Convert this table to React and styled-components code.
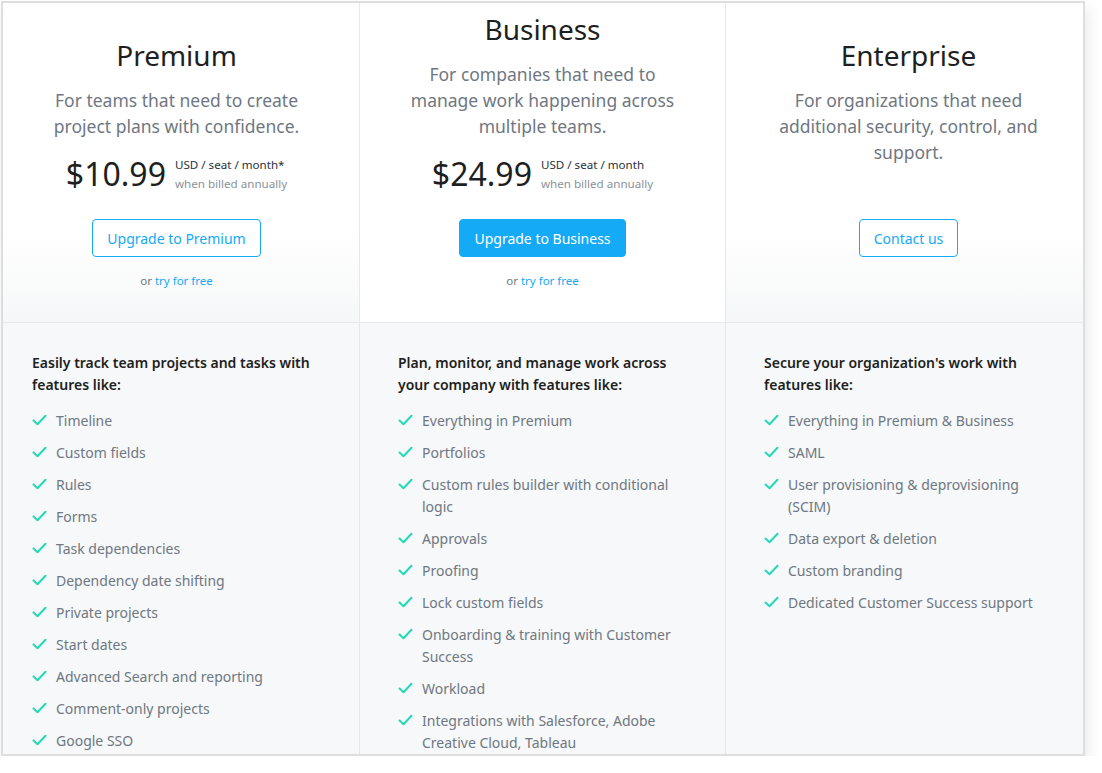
import React from 'react';
import styled, { createGlobalStyle } from 'styled-components';

const GlobalStyle = createGlobalStyle`
  html, body {
    margin: 0;
    padding: 0;
    background: #ffffff;
  }
  body {
    font-family: "Noto Sans", "Open Sans", sans-serif;
    -webkit-font-smoothing: antialiased;
  }
`;

const plans = [
    {
        name: 'Premium',
        top: 32,
        desc: ['For teams that need to create', 'project plans with confidence.'],
        price: '$10.99',
        unit: 'USD / seat / month*',
        cta: 'Upgrade to Premium',
        trial: true,
        heading: 'Easily track team projects and tasks with features like:',
        features: [
            'Timeline',
            'Custom fields',
            'Rules',
            'Forms',
            'Task dependencies',
            'Dependency date shifting',
            'Private projects',
            'Start dates',
            'Advanced Search and reporting',
            'Comment-only projects',
            'Google SSO',
        ],
    },
    {
        name: 'Business',
        top: 6,
        featured: true,
        desc: ['For companies that need to', 'manage work happening across', 'multiple teams.'],
        price: '$24.99',
        unit: 'USD / seat / month',
        cta: 'Upgrade to Business',
        trial: true,
        heading: 'Plan, monitor, and manage work across your company with features like:',
        features: [
            'Everything in Premium',
            'Portfolios',
            'Custom rules builder with conditional logic',
            'Approvals',
            'Proofing',
            'Lock custom fields',
            'Onboarding & training with Customer Success',
            'Workload',
            'Integrations with Salesforce, Adobe Creative Cloud, Tableau',
        ],
    },
    {
        name: 'Enterprise',
        top: 32,
        desc: ['For organizations that need', 'additional security, control, and', 'support.'],
        cta: 'Contact us',
        heading: "Secure your organization's work with features like:",
        features: [
            'Everything in Premium & Business',
            'SAML',
            'User provisioning & deprovisioning (SCIM)',
            'Data export & deletion',
            'Custom branding',
            'Dedicated Customer Success support',
        ],
    },
];

function Check() {
    return (
        <CheckIcon width="15" height="12" viewBox="0 0 15 12">
            <polyline points="1.5,6.5 5.5,10.2 13.5,1.8" fill="none" stroke="#25d8b6" strokeWidth="2" strokeLinecap="round" strokeLinejoin="round" />
        </CheckIcon>
    );
}

function Plan({ plan }) {
    return (
        <Column>
            <Header $top={plan.top} $featured={plan.featured}>
                <Title>{plan.name}</Title>
                <Desc>
                    {plan.desc.map((line, i) => (
                        <span key={i}>{line}<br /></span>
                    ))}
                </Desc>
                {plan.price && (
                    <PriceRow>
                        <Price>{plan.price}</Price>
                        <PriceNote>
                            <Unit>{plan.unit}</Unit>
                            <Billed>when billed annually</Billed>
                        </PriceNote>
                    </PriceRow>
                )}
                <Button $primary={plan.featured} $gap={plan.price ? 23 : 54}>{plan.cta}</Button>
                {plan.trial && (
                    <Trial>or <a href="#">try for free</a></Trial>
                )}
            </Header>
            <Features>
                <FeatureHeading>{plan.heading}</FeatureHeading>
                <FeatureList>
                    {plan.features.map(f => (
                        <Feature key={f}>
                            <Check />
                            <span>{f}</span>
                        </Feature>
                    ))}
                </FeatureList>
            </Features>
        </Column>
    );
}

export default function App() {
    return (
        <Page>
            <GlobalStyle />
            <Card>
                <Columns>
                    {plans.map(p => <Plan key={p.name} plan={p} />)}
                </Columns>
            </Card>
        </Page>
    );
}

const Page = styled.div`
padding: 1px 0 0 1px;
`;

const Card = styled.div`
width: 1080px;
height: 751px;
border: 2px solid #dedede;
box-shadow: 3px 7px 14px rgba(0, 0, 0, 0.09);
overflow: hidden;
background: #f6f8f9;
`;

const Columns = styled.div`
margin-left: -9px;
height: 100%;
display: grid;
grid-template-columns: 365px 366px 366px;
`;

const Column = styled.div`
display: flex;
flex-direction: column;
border-left: 1px solid #e6e9ec;
&:first-child {
    border-left: none;
}
`;

const Header = styled.div`
height: 320px;
box-sizing: border-box;
flex-shrink: 0;
padding-top: ${p => p.$top}px;
display: flex;
flex-direction: column;
align-items: center;
text-align: center;
border-bottom: 1px solid #e6e9ec;
background: ${p => p.$featured ? '#ffffff' : 'linear-gradient(180deg, #ffffff 0%, #ffffff 72%, #f6f7f8 100%)'};
`;

const Title = styled.h2`
margin: 0;
font-size: 28px;
line-height: 40px;
font-weight: 400;
color: #1e1f21;
`;

const Desc = styled.p`
margin: 12px 0 0;
font-size: 17.5px;
line-height: 26px;
color: #6f7782;
`;

const PriceRow = styled.div`
margin-top: 13px;
display: flex;
align-items: center;
gap: 9px;
height: 44px;
`;

const Price = styled.span`
font-size: 32px;
line-height: 44px;
color: #1e1f21;
font-weight: 400;
`;

const PriceNote = styled.div`
display: flex;
flex-direction: column;
text-align: left;
font-size: 11.6px;
line-height: 19px;
`;

const Unit = styled.span`
color: #273240;
`;

const Billed = styled.span`
color: #8a929c;
`;

const Button = styled.button`
margin-top: ${p => p.$gap}px;
height: 38px;
padding: 0 14px;
border-radius: 4px;
font-family: inherit;
font-size: 14px;
border: 1px solid #14aaf5;
background: ${p => p.$primary ? '#14aaf5' : '#ffffff'};
color: ${p => p.$primary ? '#ffffff' : '#14aaf5'};
cursor: pointer;
`;

const Trial = styled.div`
margin-top: 15px;
font-size: 11.5px;
line-height: 18px;
color: #6f7782;
a {
    color: #14aaf5;
    text-decoration: none;
}
`;

const Features = styled.div`
padding: 29px 38px 0;
background: #f6f8f9;
flex: 1;
`;

const FeatureHeading = styled.div`
font-size: 14px;
line-height: 22px;
font-weight: 600;
color: #1e1f21;
`;

const FeatureList = styled.ul`
list-style: none;
margin: 14px 0 0;
padding: 0;
display: flex;
flex-direction: column;
gap: 10px;
`;

const Feature = styled.li`
display: flex;
align-items: flex-start;
gap: 9px;
font-size: 14px;
line-height: 22px;
color: #6f7782;
`;

const CheckIcon = styled.svg`
flex-shrink: 0;
margin-top: 4px;
`;
